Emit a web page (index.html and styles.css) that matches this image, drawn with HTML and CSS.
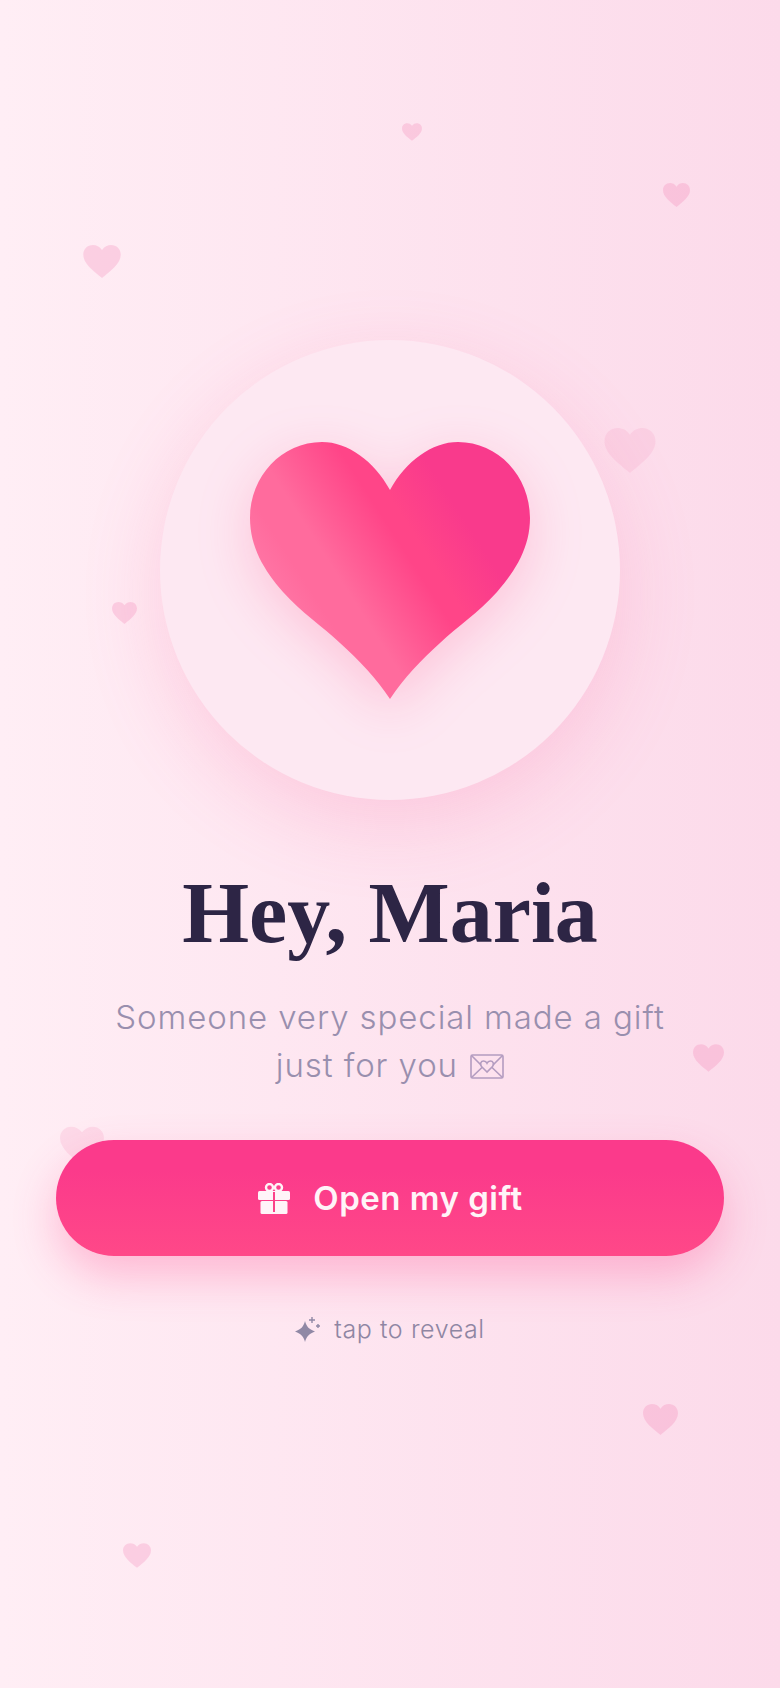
FILE: index.html

```html
<!DOCTYPE html>
<html lang="en">
<head>
    <meta charset="UTF-8">
    <meta name="viewport" content="width=device-width, initial-scale=1.0">
    <title>Hey, Maria</title>
    <link rel="stylesheet" href="styles.css">
</head>
<body>
    <svg class="defs" width="0" height="0">
        <defs>
            <path id="heart" d="M140 48C124 19 98 0 72 0C32 0 0 34 0 76C0 105 14 128 33 150C52 171 72 184 90 201C109 218 126 236 140 257C154 236 171 218 190 201C208 184 228 171 247 150C266 128 280 105 280 76C280 34 248 0 208 0C182 0 156 19 140 48Z"/>
            <path id="softHeart" d="M50 13C44 4 35 0 26 0C11 0 0 11 0 26C0 50 28 70 50 88C72 70 100 50 100 26C100 11 89 0 74 0C65 0 56 4 50 13Z"/>
            <linearGradient id="heartFill" gradientUnits="userSpaceOnUse" x1="-67" y1="43" x2="168" y2="-108">
                <stop offset="0" stop-color="#ff7ba9"/>
                <stop offset="0.18" stop-color="#ff6b9d"/>
                <stop offset="0.29" stop-color="#ff6b9d"/>
                <stop offset="0.54" stop-color="#ff4588"/>
                <stop offset="0.6" stop-color="#ff4588"/>
                <stop offset="0.78" stop-color="#f93a8c"/>
            </linearGradient>
        </defs>
    </svg>

    <!-- floating hearts behind everything -->
    <svg class="float-heart fh-1" viewBox="0 0 100 88"><use href="#softHeart"/></svg>
    <svg class="float-heart fh-2" viewBox="0 0 100 88"><use href="#softHeart"/></svg>
    <svg class="float-heart fh-3" viewBox="0 0 100 88"><use href="#softHeart"/></svg>
    <svg class="float-heart fh-4" viewBox="0 0 100 88"><use href="#softHeart"/></svg>
    <svg class="float-heart fh-5" viewBox="0 0 100 88"><use href="#softHeart"/></svg>
    <svg class="float-heart fh-6" viewBox="0 0 100 88"><use href="#softHeart"/></svg>
    <svg class="float-heart fh-7" viewBox="0 0 100 88"><use href="#softHeart"/></svg>
    <svg class="float-heart fh-8" viewBox="0 0 100 88"><use href="#softHeart"/></svg>
    <svg class="float-heart fh-9" viewBox="0 0 100 88"><use href="#softHeart"/></svg>

    <main class="screen">
        <div class="circle">
            <svg class="big-heart" viewBox="0 0 280 257"><use href="#heart" fill="url(#heartFill)"/></svg>
        </div>

        <h1 class="title">Hey, Maria</h1>

        <p class="subtitle">
            Someone very special made a gift<br>
            just for you
            <svg class="envelope" viewBox="0 0 34 25">
                <rect x="1" y="1" width="32" height="23" rx="1.500"/>
                <path d="M1.500 1.500L11 11M32.500 1.500L23 11M1.500 23.500L12.500 13M32.500 23.500L21.500 13"/>
                <path d="M17 18L11.500 12.500C9.500 10 11 7 13.600 7C15.200 7 16.400 8 17 9.200C17.600 8 18.800 7 20.400 7C23 7 24.500 10 22.500 12.500Z"/>
            </svg>
        </p>

        <button class="open-btn" type="button">
            <svg class="gift" viewBox="0 0 34 31">
                <circle class="gift-bow" cx="12.500" cy="4.500" r="3.500"/>
                <circle class="gift-bow" cx="21.500" cy="4.500" r="3.500"/>
                <rect class="gift-part" x="1" y="8" width="32" height="9" rx="1.500"/>
                <rect class="gift-part" x="3.500" y="18" width="27" height="13" rx="1.500"/>
                <rect class="gift-ribbon" x="16" y="9" width="2" height="20"/>
            </svg>
            <span>Open my gift</span>
        </button>

        <div class="hint">
            <svg class="sparkle" viewBox="0 0 26 25">
                <path d="M10 4C11.500 9.500 13.500 12 20 14.500C13.500 17 11.500 19.500 10 25C8.500 19.500 6.500 17 0 14.500C6.500 12 8.500 9.500 10 4Z"/>
                <path class="sparkle-small" d="M17 0V6M14 3H20M23 7V11M21 9H25"/>
            </svg>
            <span>tap to reveal</span>
        </div>
    </main>
</body>
</html>
```

FILE: styles.css

```css
* {
    box-sizing: border-box;
}
body {
    position: relative;
    margin: 0;
    width: 780px;
    height: 1688px;
    overflow: hidden;
    font-family: Inter, "Liberation Sans", sans-serif;
    background: linear-gradient(90deg, #ffeef5 0%, #fcdaea 100%);
}
.defs {
    position: absolute;
}
.float-heart {
    position: absolute;
    fill: #f060a0;
    opacity: 0.2;
}
.fh-1 { left: 83px; top: 245px; width: 38px; height: 33px; }
.fh-2 { left: 402px; top: 123px; width: 20px; height: 18px; }
.fh-3 { left: 663px; top: 183px; width: 27px; height: 24px; }
.fh-4 { left: 604px; top: 428px; width: 52px; height: 45px; opacity: 0.1; }
.fh-5 { left: 112px; top: 602px; width: 25px; height: 22px; }
.fh-6 { left: 693px; top: 1044px; width: 31px; height: 28px; }
.fh-7 { left: 60px; top: 1126px; width: 44px; height: 40px; opacity: 0.13; }
.fh-8 { left: 643px; top: 1404px; width: 35px; height: 31px; }
.fh-9 { left: 123px; top: 1543px; width: 28px; height: 25px; }

.screen {
    position: relative;
    display: flex;
    flex-direction: column;
    align-items: center;
    padding: 340px 56px 0;
}
.circle {
    display: flex;
    align-items: center;
    justify-content: center;
    width: 460px;
    height: 460px;
    border-radius: 50%;
    background: #fde8f2;
    box-shadow: 0 24px 80px rgba(250, 90, 150, 0.2);
}
.big-heart {
    width: 280px;
    height: 257px;
    filter: drop-shadow(0 14px 26px rgba(255, 80, 140, 0.24));
}
.title {
    margin: 63px 0 0;
    font-family: "Liberation Serif", serif;
    font-size: 86px;
    font-weight: 700;
    line-height: 100px;
    color: #2d2545;
}
.subtitle {
    margin: 30px 0 0;
    font-size: 33px;
    font-weight: 300;
    line-height: 48px;
    letter-spacing: 0.9px;
    text-align: center;
    color: #998fae;
}
.envelope {
    width: 34px;
    height: 25px;
    margin-left: 2px;
    vertical-align: -2px;
    fill: none;
    stroke: #b39cc0;
    stroke-width: 1.6;
}
.open-btn {
    display: flex;
    align-items: center;
    justify-content: center;
    gap: 22px;
    width: 668px;
    height: 116px;
    margin-top: 51px;
    border: none;
    border-radius: 58px;
    font-family: inherit;
    font-size: 33px;
    font-weight: 600;
    letter-spacing: 0.5px;
    color: #fff4f8;
    background: linear-gradient(180deg, #fb3a8b 0%, #fb3a8b 25%, #ff4888 100%);
    box-shadow: 0 20px 44px rgba(255, 70, 140, 0.3);
}
.gift {
    width: 34px;
    height: 31px;
}
.gift-bow {
    fill: none;
    stroke: #fff4f8;
    stroke-width: 2.4;
}
.gift-part {
    fill: #fff4f8;
}
.gift-ribbon {
    fill: #fc4189;
}
.hint {
    display: flex;
    align-items: center;
    gap: 13px;
    margin-top: 58px;
    font-size: 25px;
    font-weight: 300;
    letter-spacing: 0.6px;
    color: #8f86a3;
}
.sparkle {
    width: 26px;
    height: 25px;
    fill: #9088a5;
}
.sparkle-small {
    fill: none;
    stroke: #9088a5;
    stroke-width: 1.4;
}
```
